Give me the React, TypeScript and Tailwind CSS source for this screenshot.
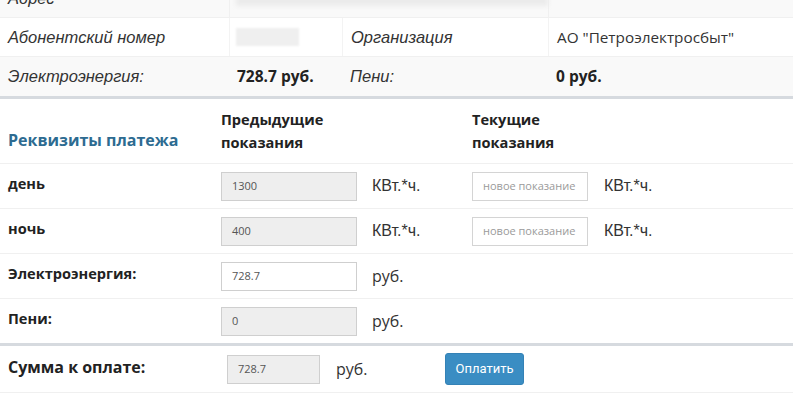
import React from 'react';

const sans = "font-['Open_Sans',sans-serif]";
const arial = "font-['Liberation_Sans',Arial,sans-serif]";

const ReadInput = ({ value, width = 'w-[136px]', gray = true }: { value: string; width?: string; gray?: boolean }) => (
  <div
    className={`${width} h-[29px] flex items-center px-[10px] border border-[#cfcfcf] text-[11px] text-[#555] ${sans} ${
      gray ? 'bg-[#eeeeee]' : 'bg-white'
    }`}
  >
    {value}
  </div>
);

const NewInput = () => (
  <div className={`w-[116px] h-[29px] flex items-center px-[10px] border border-[#d4d4d4] bg-white text-[11px] text-[#9a9a9a] ${sans}`}>
    новое показание
  </div>
);

const Unit = ({ children, arialFont = false }: { children: React.ReactNode; arialFont?: boolean }) => (
  <span className={`text-[16px] text-[#333] ${arialFont ? arial : sans}`}>{children}</span>
);

// one row of the payment details block
const MeterRow = ({ label, children }: { label: string; children: React.ReactNode }) => (
  <div className="h-[45px] flex items-center border-b border-[#f0f0f0]">
    <div className={`w-[221px] pl-2 text-[14.6px] font-bold text-[#222] ${sans} -mt-[4px]`}>{label}</div>
    {children}
  </div>
);

export default function App() {
  return (
    <div className="w-[800px] h-[400px] overflow-hidden bg-white">
      <div className="w-[793px]">
        {/* subscriber info */}
        <div className="-mt-[20px]">
          <div className="h-[38px] grid grid-cols-[229px_113px_206px_1fr] bg-[#f9f9f9] border-b border-[#f0f0f0]">
            <div className={`flex items-center pl-2 text-[16.5px] italic text-[#333] ${arial}`}>Адрес</div>
            <div className="col-span-2 border-l border-[#f0f0f0] flex items-center pl-[6px]">
              <div className="w-[340px] h-[14px] bg-[#ebebeb] blur-[2px]" />
            </div>
            <div className="border-l border-[#f0f0f0]" />
          </div>
          <div className="h-[39px] grid grid-cols-[229px_113px_206px_1fr] bg-white border-b border-[#f0f0f0]">
            <div className={`flex items-center pl-2 text-[16.5px] italic text-[#333] ${arial}`}>Абонентский номер</div>
            <div className="flex items-center pl-[6px] border-l border-[#f3f3f3]">
              <div className="w-[63px] h-[18px] bg-[#efefef] blur-[1px]" />
            </div>
            <div className={`flex items-center pl-2 text-[16.5px] italic text-[#333] border-l border-[#f3f3f3] ${arial}`}>Организация</div>
            <div className={`flex items-center pl-2 text-[15.3px] text-[#333] border-l border-[#f3f3f3] ${sans}`}>АО "Петроэлектросбыт"</div>
          </div>
          <div className="h-[39px] grid grid-cols-[229px_113px_206px_1fr] bg-[#f9f9f9]">
            <div className={`flex items-center pl-2 text-[16.5px] italic text-[#333] ${arial}`}>Электроэнергия:</div>
            <div className={`flex items-center pl-2 text-[15.5px] font-bold text-[#222] ${sans}`}>728.7 руб.</div>
            <div className={`flex items-center pl-2 text-[16.5px] italic text-[#333] ${arial}`}>Пени:</div>
            <div className={`flex items-center pl-2 text-[15.5px] font-bold text-[#222] ${sans}`}>0 руб.</div>
          </div>
          <div className="h-[3px] bg-[#d6dadf]" />
        </div>

        {/* payment details */}
        <div className="h-[65px] flex items-end pb-[9px] border-b border-[#f0f0f0]">
          <div className={`w-[221px] pl-2 pb-[2px] text-[16px] font-bold text-[#2d6b91] ${sans}`}>Реквизиты платежа</div>
          <div className={`w-[251px] text-[14.6px] font-bold text-[#222] leading-[23px] ${sans}`}>
            Предыдущие
            <br />
            показания
          </div>
          <div className={`text-[14.6px] font-bold text-[#222] leading-[23px] ${sans}`}>
            Текущие
            <br />
            показания
          </div>
        </div>

        <MeterRow label="день">
          <div className="w-[251px] flex items-center gap-[15px]">
            <ReadInput value="1300" />
            <Unit arialFont>КВт.*ч.</Unit>
          </div>
          <div className="flex items-center gap-[16px]">
            <NewInput />
            <Unit arialFont>КВт.*ч.</Unit>
          </div>
        </MeterRow>
        <MeterRow label="ночь">
          <div className="w-[251px] flex items-center gap-[15px]">
            <ReadInput value="400" />
            <Unit arialFont>КВт.*ч.</Unit>
          </div>
          <div className="flex items-center gap-[16px]">
            <NewInput />
            <Unit arialFont>КВт.*ч.</Unit>
          </div>
        </MeterRow>
        <MeterRow label="Электроэнергия:">
          <div className="flex items-center gap-[15px]">
            <ReadInput value="728.7" gray={false} />
            <Unit>руб.</Unit>
          </div>
        </MeterRow>
        <div className="h-[44px] flex items-center">
          <div className={`w-[221px] pl-2 text-[14.6px] font-bold text-[#222] ${sans} -mt-[4px]`}>Пени:</div>
          <div className="flex items-center gap-[15px]">
            <ReadInput value="0" />
            <Unit>руб.</Unit>
          </div>
        </div>
        <div className="h-[3px] bg-[#d6dadf]" />

        <div className="h-[47px] flex items-center border-b border-[#f0f0f0]">
          <div className={`w-[227px] pl-2 text-[16px] font-bold text-[#222] ${sans} -mt-[4px]`}>Сумма к оплате:</div>
          <div className="w-[218px] flex items-center gap-[16px]">
            <ReadInput value="728.7" width="w-[93px]" />
            <Unit>руб.</Unit>
          </div>
          <button
            className={`w-[79px] h-[32px] rounded-[3px] bg-[#3a8dc3] border border-[#3482b6] text-white text-[13px] font-['Roboto',sans-serif]`}
          >
            Оплатить
          </button>
        </div>
      </div>
    </div>
  );
}
